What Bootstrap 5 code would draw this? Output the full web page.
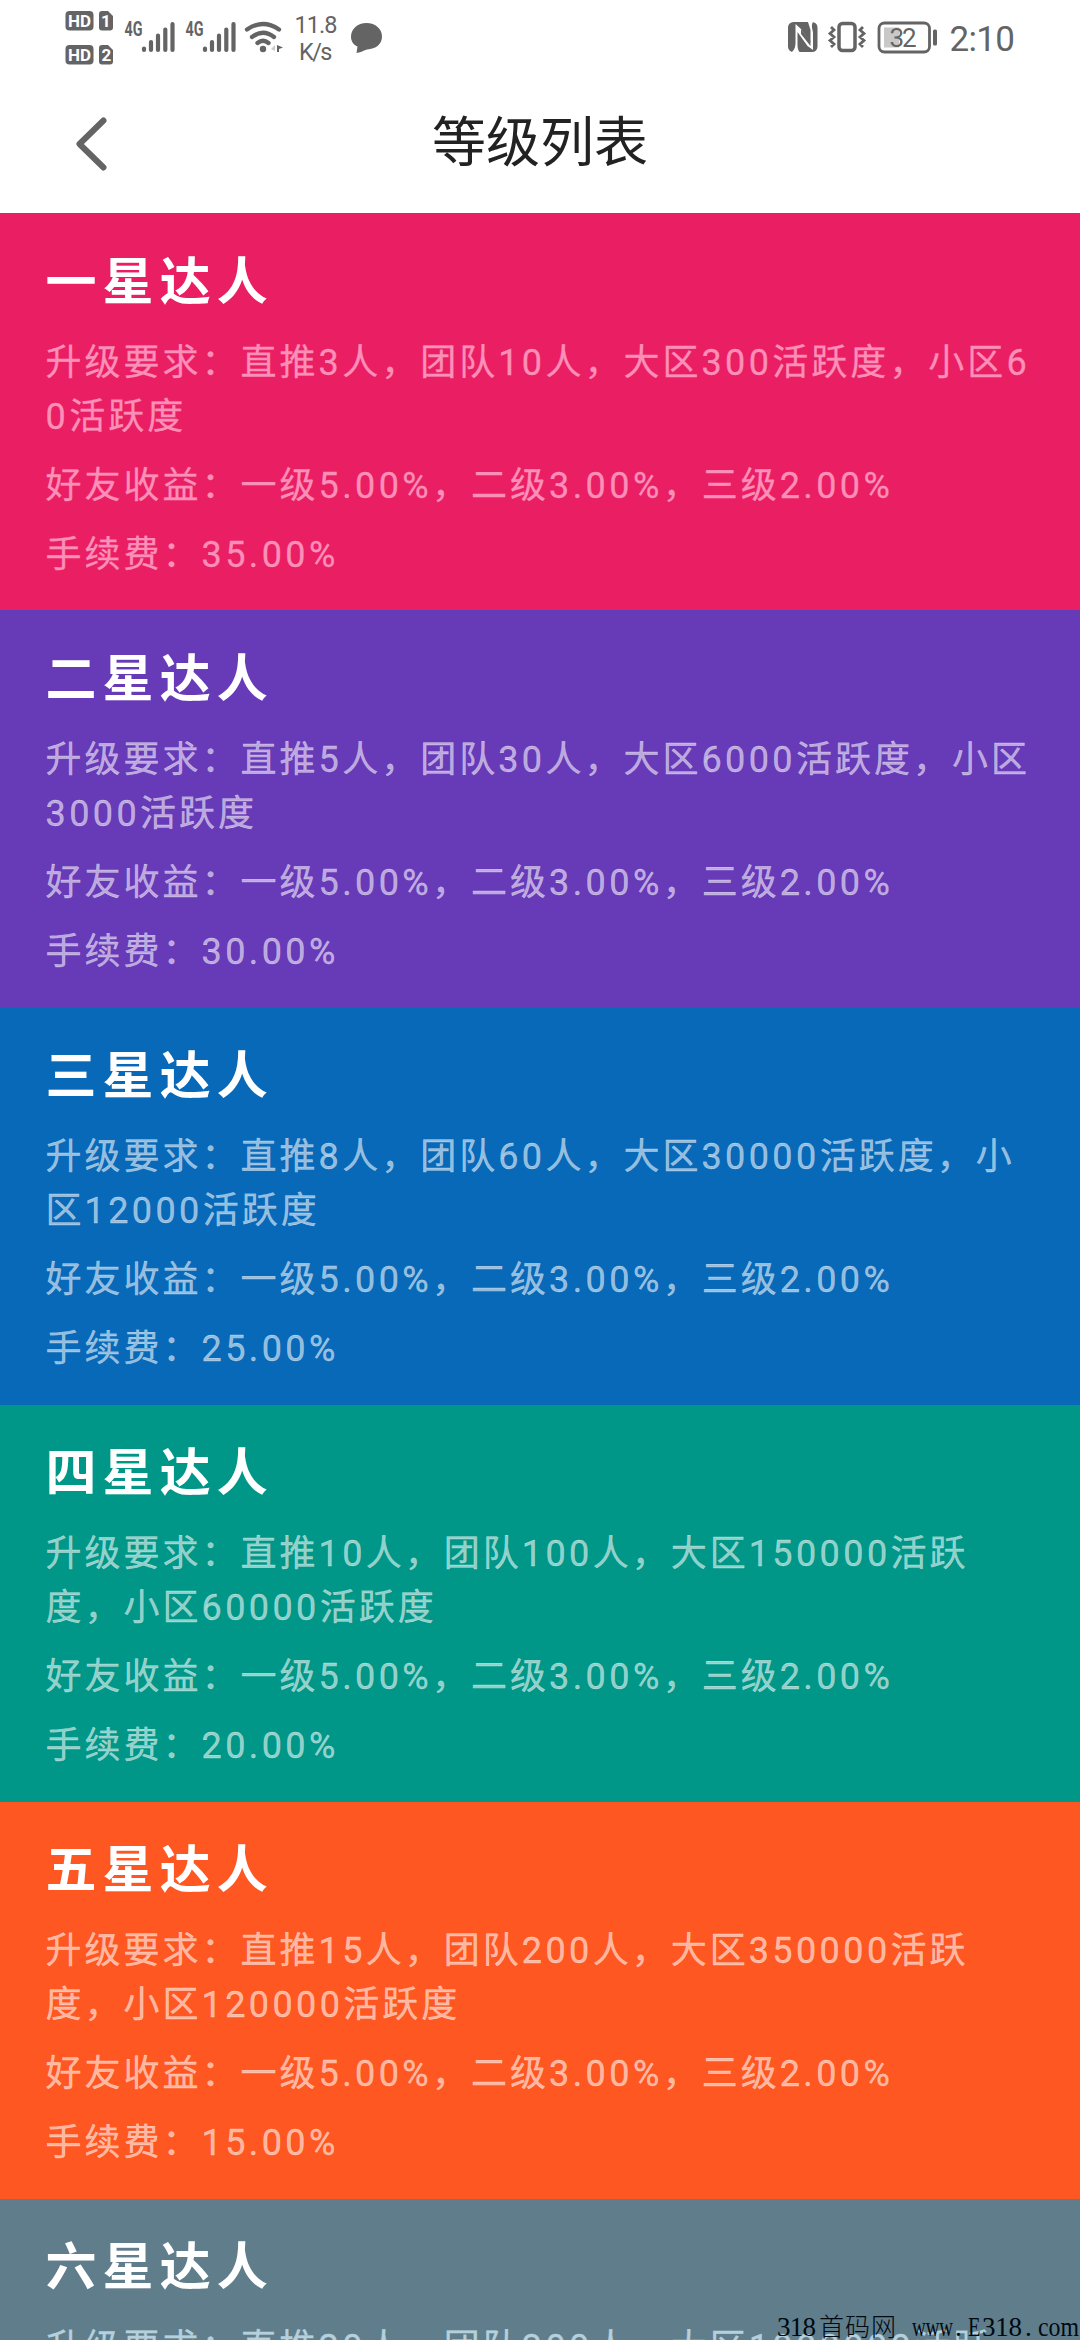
<!DOCTYPE html>
<html lang="zh-CN">
<head>
<meta charset="utf-8">
<meta name="viewport" content="width=device-width, initial-scale=1">
<title>等级列表</title>
<link href="https://cdn.jsdelivr.net/npm/bootstrap@5.3.0/dist/css/bootstrap.min.css" rel="stylesheet">
<style>
html,body{height:2340px;overflow:hidden}
body{font-family:Roboto,"Noto Sans CJK SC",sans-serif;background:#fff}
.screen{height:2340px}
.statusbar{height:76px;padding-left:65px}
.statusbar svg text,.stamp text{white-space:pre}
.titlebar{height:137px;padding-left:75px}
.titlebar h1{font-size:54px;line-height:80px;color:#222;left:0;right:0;top:28px}
.level{height:397.2px;padding:30.5px 0 0 45.5px;color:rgba(255,255,255,.58);white-space:nowrap}
.level h2{font-size:51px;line-height:77px;font-weight:700;letter-spacing:6.1px;color:#fff;margin-bottom:15px}
.level p{font-size:36px;line-height:54px;letter-spacing:3px;margin-bottom:15px;-webkit-text-stroke:.3px}
.level i{font-style:normal;letter-spacing:3.4px}
.lv1{background:#e91e63}.lv2{background:#673ab7}.lv3{background:#0769b8}
.lv4{background:#009688}.lv5{background:#ff5722}.lv6{background:#607d8b}
.lv1 p{color:#fc8fb8}.lv6 p{color:#b5d0dc}
.stamp{right:0;bottom:0}
</style>
</head>
<body>
<div class="screen position-relative overflow-hidden d-flex flex-column">
<header class="flex-shrink-0">
<div class="statusbar d-flex">
<svg width="330" height="76" viewBox="65 0 330 76" fill="#646464" font-family="Roboto,sans-serif">
<rect x="65.5" y="11" width="28" height="19.5" rx="4"/><rect x="65.5" y="45" width="28" height="19.5" rx="4"/>
<path d="M102 11H108L113 16V27.500Q113 30.500 110 30.500H102Q99 30.500 99 27.500V14Q99 11 102 11ZM102 45H108L113 50V61.500Q113 64.500 110 64.500H102Q99 64.500 99 61.500V48Q99 45 102 45Z"/>
<g fill="#fff" font-size="17" font-weight="700"><text x="68" y="27" textLength="23" lengthAdjust="spacingAndGlyphs">HD</text><text x="68" y="61" textLength="23" lengthAdjust="spacingAndGlyphs">HD</text><text x="101" y="27">1</text><text x="101.500" y="61">2</text></g>
<g font-size="20" font-weight="700"><text x="124.500" y="36" textLength="18" lengthAdjust="spacingAndGlyphs">4G</text><text x="185.500" y="36" textLength="18" lengthAdjust="spacingAndGlyphs">4G</text></g>
<path id="sig" d="M144 48.500V50M151 42V50M158 35.500V50M165.300 29.500V50M172.500 24V50" stroke="#646464" stroke-width="4.200" stroke-linecap="round"/>
<use href="#sig" x="61"/>
<g fill="none" stroke="#646464" stroke-width="4.300" stroke-linecap="round"><path d="M247 29.500Q263 18.500 279 29.500M252 37Q263 28.500 274 37M257.500 43Q263 38.500 268.500 43"/></g>
<circle cx="263" cy="49" r="3.200"/><path d="M277 45L283 47.500L279 49V52H277Z"/><path d="M275 45V51L271 49Z" fill="#ccc"/>
<g font-size="23.500"><text x="294.500" y="33" textLength="43">11.8</text><text x="299" y="60" textLength="33.500">K/s</text></g>
<path d="M366.500 23C375.500 23 382 29 382 36.500C382 44 376 49 367 49.500C363 51 360 52.500 356.500 53L357.500 46.500C353 44.500 351 41 351 36.500C351 29 357.500 23 366.500 23Z"/>
</svg>
<svg class="ms-auto" width="300" height="76" viewBox="780 0 300 76" fill="#646464" font-family="Roboto,sans-serif">
<rect x="788" y="22" width="29.500" height="30" rx="5.500"/>
<path d="M792 52C795 49 795.500 46 795.500 42V24L801 29L810.500 42V30L808 22H813C810.500 26 813 30 813 33V50L807.500 46L797.500 32V44C797.500 48 798 50 799.500 52Z" fill="#fff"/><path d="M801 29L810.500 41V46L801 34Z"/>
<rect x="839" y="23.500" width="16" height="27" rx="3.500" fill="none" stroke="#646464" stroke-width="3.500"/>
<path d="M831 27L834 30L830 33.500L834 37L830 40.500L834 44L831 47M863 27L860 30L864 33.500L860 37L864 40.500L860 44L863 47" fill="none" stroke="#646464" stroke-width="2.800"/>
<rect x="879" y="23" width="50.500" height="29" rx="5.500" fill="none" stroke="#646464" stroke-width="2.800"/><rect x="884" y="27.500" width="15" height="20" fill="#c8c8c8"/>
<rect x="933" y="29.500" width="4" height="16" rx="1.500"/>
<text x="889.500" y="46.500" font-size="26" textLength="27">32</text>
<text x="949.500" y="51" font-size="35" textLength="65.500">2:10</text>
</svg>
</div>
<div class="titlebar position-relative">
<svg width="34" height="60" viewBox="75 114 34 60" style="margin-top:38px"><path d="M103.500 120.500L79.500 144L103.500 167.500" fill="none" stroke="#646464" stroke-width="6" stroke-linecap="round" stroke-linejoin="round"/></svg>
<h1 class="position-absolute text-center fw-normal m-0">等级列表</h1>
</div>
</header>
<main>
<section class="level lv1"><h2>一星达人</h2><p>升级要求：直推<i>3</i>人，团队<i>10</i>人，大区<i>300</i>活跃度，小区<i>6</i><br><i>0</i>活跃度</p><p>好友收益：一级<i>5.00%</i>，二级<i>3.00%</i>，三级<i>2.00%</i></p><p>手续费：<i>35.00%</i></p></section>
<section class="level lv2"><h2>二星达人</h2><p>升级要求：直推<i>5</i>人，团队<i>30</i>人，大区<i>6000</i>活跃度，小区<br><i>3000</i>活跃度</p><p>好友收益：一级<i>5.00%</i>，二级<i>3.00%</i>，三级<i>2.00%</i></p><p>手续费：<i>30.00%</i></p></section>
<section class="level lv3"><h2>三星达人</h2><p>升级要求：直推<i>8</i>人，团队<i>60</i>人，大区<i>30000</i>活跃度，小<br>区<i>12000</i>活跃度</p><p>好友收益：一级<i>5.00%</i>，二级<i>3.00%</i>，三级<i>2.00%</i></p><p>手续费：<i>25.00%</i></p></section>
<section class="level lv4"><h2>四星达人</h2><p>升级要求：直推<i>10</i>人，团队<i>100</i>人，大区<i>150000</i>活跃<br>度，小区<i>60000</i>活跃度</p><p>好友收益：一级<i>5.00%</i>，二级<i>3.00%</i>，三级<i>2.00%</i></p><p>手续费：<i>20.00%</i></p></section>
<section class="level lv5"><h2>五星达人</h2><p>升级要求：直推<i>15</i>人，团队<i>200</i>人，大区<i>350000</i>活跃<br>度，小区<i>120000</i>活跃度</p><p>好友收益：一级<i>5.00%</i>，二级<i>3.00%</i>，三级<i>2.00%</i></p><p>手续费：<i>15.00%</i></p></section>
<section class="level lv6"><h2>六星达人</h2><p>升级要求：直推<i>20</i>人，团队<i>300</i>人，大区<i>1000000</i>活跃</p></section>
</main>
<svg class="stamp position-absolute" width="305" height="30" viewBox="775 2310 305 30" font-size="27" fill="#000a12" font-family="'Liberation Serif','Noto Sans CJK SC',serif">
<text x="777" y="2336" textLength="39">318</text><text x="819" y="2336" textLength="77" font-weight="300" font-size="25">首码网</text>
<text x="912" y="2336" textLength="41" lengthAdjust="spacingAndGlyphs">www</text><text x="955" y="2336">.</text><text x="968" y="2336" textLength="12.500" lengthAdjust="spacingAndGlyphs">E</text><text x="982" y="2336" textLength="40">318</text><text x="1025" y="2336">.</text><text x="1038" y="2336" textLength="41" lengthAdjust="spacingAndGlyphs">com</text>
</svg>
</div>
<script src="https://cdn.jsdelivr.net/npm/bootstrap@5.3.0/dist/js/bootstrap.bundle.min.js"></script>
</body>
</html>
